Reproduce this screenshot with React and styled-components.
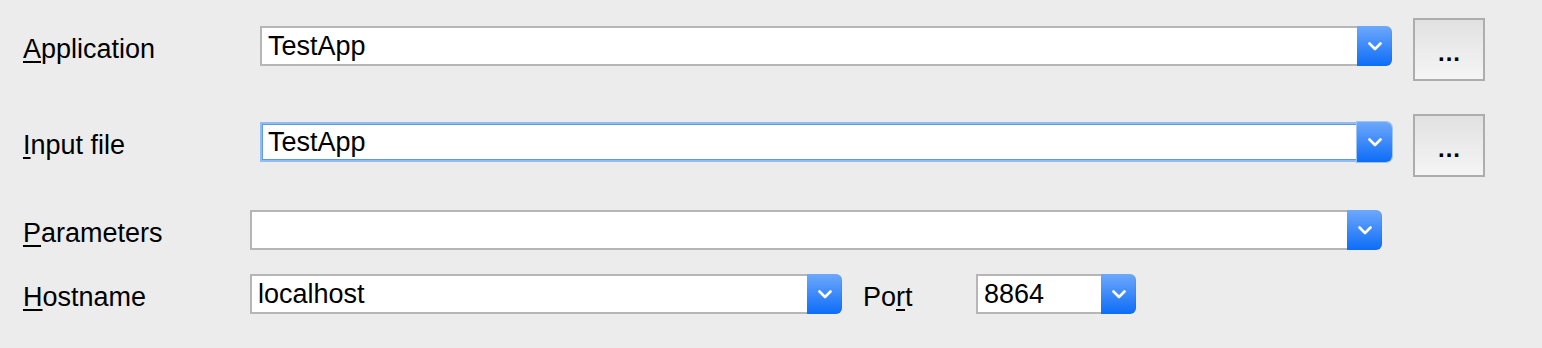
import React from 'react';
import styled, { createGlobalStyle } from 'styled-components';

const GlobalStyle = createGlobalStyle`
  html, body {
    margin: 0;
    padding: 0;
    background: #ececec;
  }
  body {
    font-family: "Liberation Sans", Arial, Helvetica, sans-serif;
    color: #000;
  }
`;

export const StyledForm = styled.div`
  width: 1542px;
  height: 348px;
  box-sizing: border-box;
  padding: 18px 0 0 23px;
  background: #ececec;
  display: flex;
  flex-direction: column;
`;

const Row = styled.div`
  display: flex;
  align-items: flex-start;
  margin-top: ${p => p.$gap || 0}px;
`;

const FieldGroup = styled.div`
  display: flex;
  align-items: center;
  margin-top: ${p => p.$offset || 0}px;
`;

const Label = styled.label`
  width: ${p => p.$width || 227}px;
  height: 40px;
  margin-left: ${p => p.$indent || 0}px;
  box-sizing: border-box;
  padding-top: 3px;
  font-size: 27px;
  line-height: 40px;
  white-space: nowrap;
  flex-shrink: 0;
  u {
    text-decoration: underline;
    text-decoration-thickness: 2px;
    text-underline-offset: 3px;
  }
`;

const Combo = styled.div`
  display: flex;
  width: ${p => p.$width}px;
  height: 40px;
  margin-left: ${p => p.$indent || 0}px;
  flex-shrink: 0;
`;

const ComboField = styled.div`
  flex: 1;
  height: 40px;
  box-sizing: border-box;
  background: #fff;
  border: 2px solid ${p => (p.$focused ? '#93bdf0' : '#b6b6b6')};
  border-right: none;
  box-shadow: ${p => (p.$focused ? 'inset 0 0 0 1px #5f99e4' : 'none')};
  padding-left: 6px;
  font-size: 27px;
  line-height: 37px;
  white-space: nowrap;
  overflow: hidden;
`;

const ArrowButton = styled.div`
  width: 35px;
  height: 40px;
  box-sizing: border-box;
  border-radius: 0 6px 6px 0;
  background: linear-gradient(to bottom, #6da8fb 0%, #3d8afa 50%, #0d6df8 100%);
  box-shadow: ${p => (p.$focused ? '0 0 0 1px #9ec4f2' : 'inset -1px 0 0 rgba(0,0,0,0.05)')};
  display: flex;
  align-items: center;
  justify-content: center;
  flex-shrink: 0;
`;

const BrowseButton = styled.button`
  width: 72px;
  height: 63px;
  margin-left: 21px;
  box-sizing: border-box;
  border: 2px solid #adadad;
  border-radius: 0;
  background: linear-gradient(to bottom, #e1e1e1 0%, #f5f5f5 100%);
  font-family: "Liberation Sans", Arial, sans-serif;
  font-size: 24px;
  font-weight: bold;
  line-height: 1;
  letter-spacing: 1px;
  color: #000;
  padding: 6px 0 0 1px;
  flex-shrink: 0;
`;

const Chevron = () => (
  <svg width="14" height="9" viewBox="0 0 14 9">
    <polyline
      points="1.5,1.5 7,7 12.5,1.5"
      fill="none"
      stroke="#fff"
      strokeWidth="2.6"
      strokeLinecap="round"
      strokeLinejoin="round"
    />
  </svg>
);

const ComboBox = ({ width, indent, value, focused }) => (
  <Combo $width={width} $indent={indent}>
    <ComboField $focused={focused}>{value}</ComboField>
    <ArrowButton $focused={focused}>
      <Chevron />
    </ArrowButton>
  </Combo>
);

const Mnemonic = ({ before = '', letter, after }) => (
  <>
    {before}
    <u>{letter}</u>
    {after}
  </>
);

const App = () => (
  <>
    <GlobalStyle />
    <StyledForm>
      <Row>
        <FieldGroup $offset={8}>
          <Label>
            <Mnemonic letter="A" after="pplication" />
          </Label>
          <ComboBox width={1132} indent={10} value="TestApp" />
        </FieldGroup>
        <BrowseButton>...</BrowseButton>
      </Row>
      <Row $gap={33}>
        <FieldGroup $offset={8}>
          <Label>
            <Mnemonic letter="I" after="nput file" />
          </Label>
          <ComboBox width={1132} indent={10} value="TestApp" focused />
        </FieldGroup>
        <BrowseButton>...</BrowseButton>
      </Row>
      <Row $gap={33}>
        <FieldGroup>
          <Label>
            <Mnemonic letter="P" after="arameters" />
          </Label>
          <ComboBox width={1132} value="" />
        </FieldGroup>
      </Row>
      <Row $gap={24}>
        <FieldGroup>
          <Label>
            <Mnemonic letter="H" after="ostname" />
          </Label>
          <ComboBox width={592} value="localhost" />
          <Label $width={113} $indent={21}>
            <Mnemonic before="Po" letter="r" after="t" />
          </Label>
          <ComboBox width={160} value="8864" />
        </FieldGroup>
      </Row>
    </StyledForm>
  </>
);

export default App;
